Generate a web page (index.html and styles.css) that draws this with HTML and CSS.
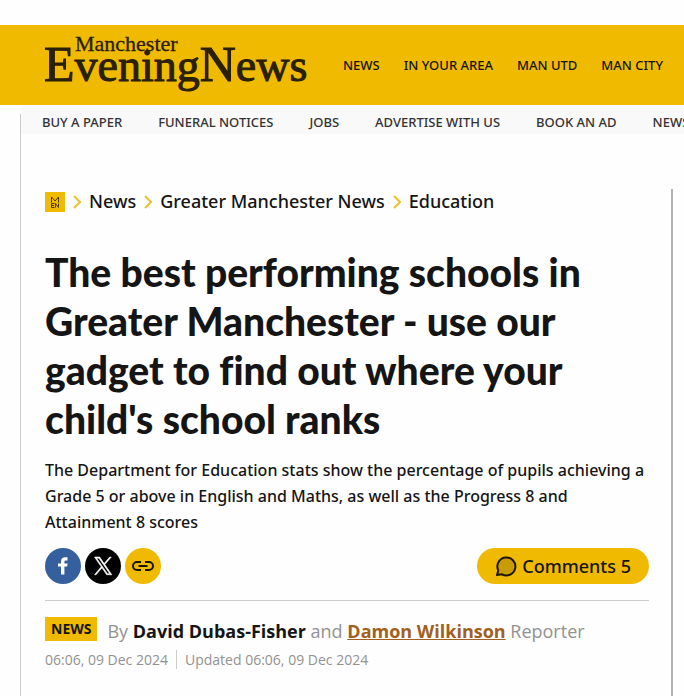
FILE: index.html
```html
<!DOCTYPE html>
<html lang="en">
<head>
<meta charset="utf-8">
<meta name="viewport" content="width=device-width, initial-scale=1">
<title>The best performing schools in Greater Manchester</title>
<link rel="stylesheet" href="styles.css">
</head>
<body>
<header class="masthead">
  <a class="logo" href="#">
    <svg width="264" height="64" viewBox="0 0 264 64">
      <text class="logo-small" x="31" y="18">Manchester</text>
      <text class="logo-large" x="0" y="48"><tspan class="cap">E</tspan>vening<tspan class="cap">N</tspan>ews</text>
    </svg>
  </a>
  <nav class="main-nav">
    <a href="#">NEWS</a>
    <a href="#">IN YOUR AREA</a>
    <a href="#">MAN UTD</a>
    <a href="#">MAN CITY</a>
  </nav>
</header>
<div class="page">
  <nav class="sub-nav">
    <a href="#">BUY A PAPER</a>
    <a href="#">FUNERAL NOTICES</a>
    <a href="#">JOBS</a>
    <a href="#">ADVERTISE WITH US</a>
    <a href="#">BOOK AN AD</a>
    <a href="#">NEWSLETTERS</a>
  </nav>
  <main class="article">
    <nav class="breadcrumb">
      <a class="home" href="#"><svg width="20" height="20" viewBox="0 0 20 20" fill="none" stroke="#4a3a00">
        <path d="M6.500 10.500V5L10 9l3.500-4v5.500M9.500 11.500h-3v4h3M6.500 13.500h2.500M10.500 15.500v-4l3 4v-4"/></svg></a>
      <svg class="chevron" width="8" height="14" viewBox="0 0 8 14"><path d="M1 1l6 6-6 6"/></svg>
      <a href="#">News</a>
      <svg class="chevron" width="8" height="14" viewBox="0 0 8 14"><path d="M1 1l6 6-6 6"/></svg>
      <a href="#">Greater Manchester News</a>
      <svg class="chevron" width="8" height="14" viewBox="0 0 8 14"><path d="M1 1l6 6-6 6"/></svg>
      <a href="#">Education</a>
    </nav>
    <h1>The best performing schools in Greater Manchester - use our gadget to find out where your child's school ranks</h1>
    <p class="lead">The Department for Education stats show the percentage of pupils achieving a Grade 5 or above in English and Maths, as well as the Progress 8 and Attainment 8 scores</p>
    <div class="actions">
      <a class="share facebook" href="#" aria-label="Facebook"><svg width="36" height="36" viewBox="0 0 36 36"><path fill="#fff" d="M16 26.500v-8h-3v-3h3v-2c0-3 1.700-4.200 4.200-4.200h2.300v3.200h-1.600c-1.300 0-1.500.6-1.500 1.500v1.500h3.200l-.5 3h-2.700v8z"/></svg></a>
      <a class="share x" href="#" aria-label="X"><svg width="36" height="36" viewBox="0 0 36 36"><g transform="translate(9.300 9) scale(.74)"><path fill="#fff" d="M14.234 10.162 22.977 0h-2.072l-7.591 8.824L7.251 0H.258l9.168 13.343L.258 24H2.330l8.016-9.318L16.749 24h6.993zM11.397 13.461l-.929-1.329L3.076 1.560h3.182l5.965 8.532.929 1.329 7.754 11.090h-3.182z" stroke="#fff" stroke-width=".8"/></g></svg></a>
      <button class="share link" type="button" aria-label="Copy link"><svg width="36" height="36" viewBox="0 0 36 36" fill="none" stroke="#1c1705" stroke-width="2"><path d="M16 14h-4a4 4 0 0 0 0 8h4M20 14h4a4 4 0 0 1 0 8h-4M13.500 18h9"/></svg></button>
      <button class="comments" type="button"><svg width="22" height="22" viewBox="0 0 22 22"><path d="M2 20L3.300 15.400A9 9 0 1 1 7 19.300z" fill="#c99c04" stroke="#1c1705" stroke-width="2" stroke-linejoin="round"/></svg>Comments 5</button>
    </div>
    <div class="byline">
      <a class="tag" href="#">NEWS</a>
      <span class="authors">By <strong>David Dubas-Fisher</strong> and <a href="#">Damon Wilkinson</a> Reporter</span>
    </div>
    <div class="dates"><time>06:06, 09 Dec 2024</time><span class="updated">Updated <time>06:06, 09 Dec 2024</time></span></div>
  </main>
</div>
</body>
</html>
```
FILE: styles.css
```css
* { box-sizing: border-box; }

body {
  margin: 0;
  padding-top: 25px;
  background: #fefefe;
  color: #151515;
  font-family: "Open Sans", sans-serif;
  overflow-x: hidden;
}

a { color: inherit; text-decoration: none; }
svg { display: block; flex: none; }
button { border: 0; padding: 0; color: inherit; font: inherit; cursor: pointer; }

.masthead {
  display: flex;
  align-items: center;
  gap: 35px;
  height: 80px;
  padding-left: 44px;
  background: #f0ba00;
}

.logo svg { overflow: visible; }
.logo text { font-family: "Liberation Serif", serif; fill: #2a2008; stroke: #2a2008; }
.logo-small { font-size: 22px; stroke-width: .3px; }
.logo-large { font-size: 46px; stroke-width: 1px; }
.cap { font-size: 50px; }

.main-nav, .sub-nav {
  display: flex;
  font-family: "Noto Sans", "Open Sans", sans-serif;
  font-size: 13px;
  font-weight: 500;
  line-height: 20px;
  white-space: nowrap;
}
.main-nav { gap: 24px; }

.page {
  min-height: 591px;
  margin-left: 20px;
  border-left: 1px solid;
  border-image: linear-gradient(transparent 10px, #ccc 10px) 1;
}

.sub-nav {
  gap: 36px;
  height: 29px;
  padding: 7px 0 0 21px;
  background: #f9f9f9;
  color: #333;
  overflow: hidden;
}

.article {
  min-height: 507px;
  margin: 55px 11px 0 0;
  padding: 0 22px 0 24px;
  border-right: 2px solid #b3b3b3;
}

.breadcrumb {
  display: flex;
  align-items: center;
  gap: 8px;
  font-family: "Noto Sans", "Open Sans", sans-serif;
  font-size: 18px;
  font-weight: 500;
  line-height: 25px;
}
.home { background: #f0ba00; }
.chevron { fill: none; stroke: #edc12e; stroke-width: 2; }

h1 {
  margin: 34px 0 0;
  font-family: Lato, sans-serif;
  font-size: 39px;
  font-weight: 900;
  font-variant-ligatures: none;
  line-height: 49px;
}

.lead {
  margin: 13px 0 0;
  font-family: "Noto Sans", "Open Sans", sans-serif;
  font-size: 16px;
  font-weight: 500;
  line-height: 26px;
}

.actions {
  display: flex;
  gap: 4px;
  margin-top: 13px;
  padding-bottom: 16px;
  border-bottom: 1px solid #ccc;
}
.share { width: 36px; height: 36px; border-radius: 50%; }
.facebook { background: #365f9e; }
.x { background: #000; }
.link { background: #f0ba00; }

.comments {
  display: flex;
  align-items: center;
  gap: 5px;
  margin-left: auto;
  padding: 0 18px;
  border-radius: 18px;
  background: #f0ba00;
  font-family: "Noto Sans", "Open Sans", sans-serif;
  font-size: 18px;
  font-weight: 500;
}

.byline {
  display: flex;
  gap: 10px;
  margin-top: 16px;
  line-height: 24px;
}
.tag {
  height: 24px;
  padding: 0 6px;
  background: #f0ba00;
  font-size: 14px;
  font-weight: 700;
}
.authors { padding-top: 2px; color: #929292; font-size: 18px; }
.authors strong { color: #151515; }
.authors a { color: #a16020; font-weight: 700; text-decoration: underline; }

.dates {
  display: flex;
  margin-top: 7px;
  color: #929292;
  font-size: 14px;
  line-height: 19px;
}
.updated { margin-left: 8px; padding-left: 8px; border-left: 1px solid #ccc; }
```
